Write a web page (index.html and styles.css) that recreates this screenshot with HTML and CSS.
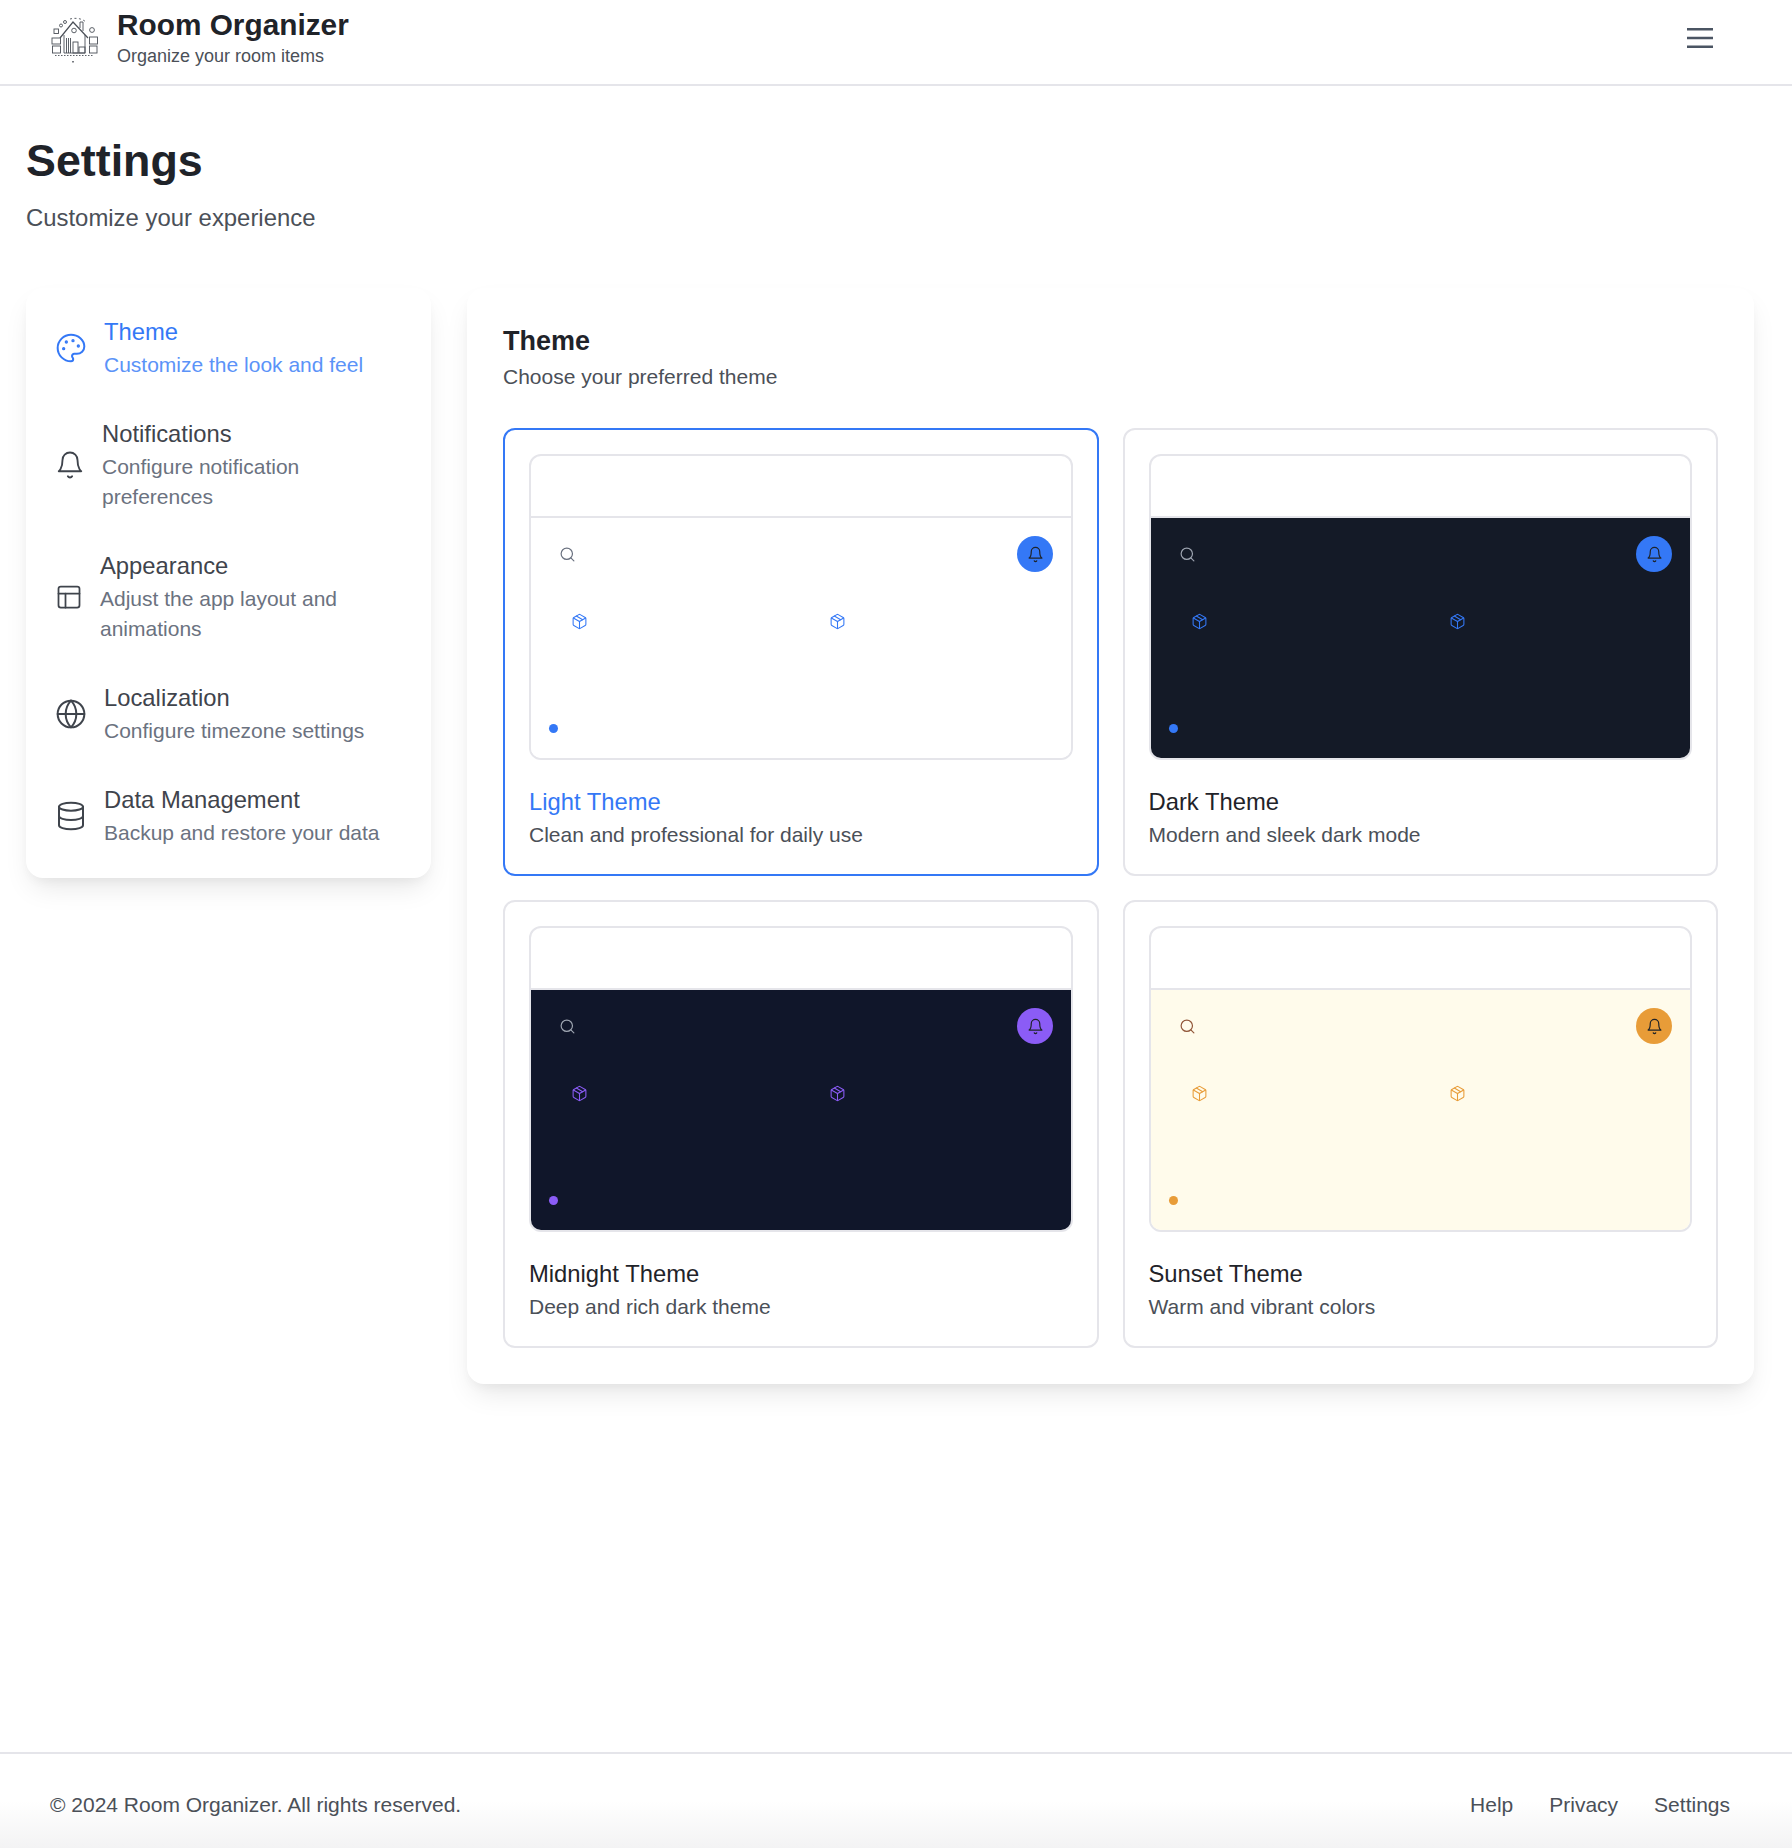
FILE: index.html
```html
<!DOCTYPE html>
<html lang="en">
<head>
    <meta charset="UTF-8">
    <meta name="viewport" content="width=device-width, initial-scale=1.0">
    <title>Settings - Room Organizer</title>
    <link rel="stylesheet" href="styles.css">
</head>
<body>

<svg class="iconDefs" width="0" height="0" aria-hidden="true">
    <defs>
        <symbol id="i-palette" viewBox="0 0 24 24"><circle cx="13.5" cy="6.5" r=".5" fill="currentColor"/><circle cx="17.5" cy="10.5" r=".5" fill="currentColor"/><circle cx="8.5" cy="7.5" r=".5" fill="currentColor"/><circle cx="6.5" cy="12.5" r=".5" fill="currentColor"/><path d="M12 2C6.5 2 2 6.5 2 12s4.5 10 10 10c.926 0 1.648-.746 1.648-1.688 0-.437-.18-.835-.437-1.125-.29-.289-.438-.652-.438-1.125a1.64 1.64 0 0 1 1.668-1.668h1.996c3.051 0 5.555-2.503 5.555-5.554C21.965 6.012 17.461 2 12 2z"/></symbol>
        <symbol id="i-bell" viewBox="0 0 24 24"><path d="M6 8a6 6 0 0 1 12 0c0 7 3 9 3 9H3s3-2 3-9"/><path d="M10.3 21a1.94 1.94 0 0 0 3.4 0"/></symbol>
        <symbol id="i-layout" viewBox="0 0 24 24"><rect x="3" y="3" width="18" height="18" rx="2"/><path d="M3 9h18"/><path d="M9 21V9"/></symbol>
        <symbol id="i-globe" viewBox="0 0 24 24"><circle cx="12" cy="12" r="10"/><path d="M12 2a14.5 14.5 0 0 0 0 20 14.5 14.5 0 0 0 0-20"/><path d="M2 12h20"/></symbol>
        <symbol id="i-database" viewBox="0 0 24 24"><ellipse cx="12" cy="5" rx="9" ry="3"/><path d="M3 5v14a9 3 0 0 0 18 0V5"/><path d="M3 12a9 3 0 0 0 18 0"/></symbol>
        <symbol id="i-search" viewBox="0 0 24 24"><circle cx="11" cy="11" r="8"/><path d="m21 21-4.3-4.3"/></symbol>
        <symbol id="i-package" viewBox="0 0 24 24"><path d="m7.5 4.27 9 5.15"/><path d="M21 8a2 2 0 0 0-1-1.73l-7-4a2 2 0 0 0-2 0l-7 4A2 2 0 0 0 3 8v8a2 2 0 0 0 1 1.73l7 4a2 2 0 0 0 2 0l7-4A2 2 0 0 0 21 16Z"/><path d="m3.3 7 8.7 5 8.7-5"/><path d="M12 22V12"/></symbol>
    </defs>
</svg>

<header class="topBar">
    <div class="brand">
        <svg class="brandLogo" viewBox="0 0 48 46" fill="none" stroke="#4a4f57" stroke-width="0.9">
            <path d="M10 21 23 5l15 16" stroke-width="1.200"/>
            <path d="M14 18v18h21V18"/>
            <path d="M30 11V5h3v9"/>
            <circle cx="24" cy="13.500" r="2.300"/>
            <path d="M16.500 21v15M18.500 21v15M20.500 21v15"/>
            <rect x="23" y="25" width="5" height="11"/>
            <rect x="29" y="30" width="6" height="6"/>
            <rect x="2.500" y="29" width="8" height="7"/>
            <rect x="2" y="21" width="8.500" height="6"/>
            <rect x="4" y="12" width="4.500" height="4.500"/>
            <rect x="39.500" y="20" width="8" height="7"/>
            <rect x="39.500" y="29" width="7.500" height="7"/>
            <circle cx="11" cy="8.500" r="1.500"/>
            <circle cx="15" cy="5" r="1.500"/>
            <circle cx="42" cy="13" r="2.400"/>
            <path d="M20 2c6-1.500 12-.5 16 3" stroke-dasharray="2 2.500"/>
            <path d="M5 38.500h38" stroke-dasharray="1.500 1.500"/>
            <path d="M23 44v1.500" stroke-width="1.500"/>
        </svg>
        <div>
            <div class="brandName">Room Organizer</div>
            <div class="brandTag">Organize your room items</div>
        </div>
    </div>
    <svg class="menuIcon" width="26" height="20" viewBox="0 0 26 20" fill="none" stroke="#4b5563" stroke-width="2.400">
        <path d="M0 1.200h26M0 10h26M0 18.800h26"/>
    </svg>
</header>

<main class="page">
    <h1 class="pageTitle">Settings</h1>
    <p class="pageSub">Customize your experience</p>

    <div class="settingsLayout">
        <nav class="sideNav">
            <a class="navItem active">
                <svg class="navIcon"><use href="#i-palette"/></svg>
                <span class="navText"><span class="navTitle">Theme</span><span class="navDesc">Customize the look and feel</span></span>
            </a>
            <a class="navItem">
                <svg class="navIcon navIconMd"><use href="#i-bell"/></svg>
                <span class="navText"><span class="navTitle">Notifications</span><span class="navDesc">Configure notification preferences</span></span>
            </a>
            <a class="navItem">
                <svg class="navIcon navIconSm"><use href="#i-layout"/></svg>
                <span class="navText"><span class="navTitle">Appearance</span><span class="navDesc">Adjust the app layout and animations</span></span>
            </a>
            <a class="navItem">
                <svg class="navIcon"><use href="#i-globe"/></svg>
                <span class="navText"><span class="navTitle">Localization</span><span class="navDesc">Configure timezone settings</span></span>
            </a>
            <a class="navItem">
                <svg class="navIcon"><use href="#i-database"/></svg>
                <span class="navText"><span class="navTitle">Data Management</span><span class="navDesc">Backup and restore your data</span></span>
            </a>
        </nav>

        <section class="panel">
            <h2 class="panelTitle">Theme</h2>
            <p class="panelSub">Choose your preferred theme</p>

            <div class="themeGrid">
                <div class="themeCard selected light">
                    <div class="preview">
                        <div class="previewTop"></div>
                        <div class="previewBody">
                            <div class="previewRow">
                                <svg class="miniIcon searchIcon"><use href="#i-search"/></svg>
                                <span class="bellBadge"><svg class="miniIcon"><use href="#i-bell"/></svg></span>
                            </div>
                            <div class="previewItems">
                                <svg class="miniIcon boxIcon"><use href="#i-package"/></svg>
                                <svg class="miniIcon boxIcon"><use href="#i-package"/></svg>
                            </div>
                            <span class="previewDot"></span>
                        </div>
                    </div>
                    <div class="themeName">Light Theme</div>
                    <div class="themeDesc">Clean and professional for daily use</div>
                </div>

                <div class="themeCard dark">
                    <div class="preview">
                        <div class="previewTop"></div>
                        <div class="previewBody">
                            <div class="previewRow">
                                <svg class="miniIcon searchIcon"><use href="#i-search"/></svg>
                                <span class="bellBadge"><svg class="miniIcon"><use href="#i-bell"/></svg></span>
                            </div>
                            <div class="previewItems">
                                <svg class="miniIcon boxIcon"><use href="#i-package"/></svg>
                                <svg class="miniIcon boxIcon"><use href="#i-package"/></svg>
                            </div>
                            <span class="previewDot"></span>
                        </div>
                    </div>
                    <div class="themeName">Dark Theme</div>
                    <div class="themeDesc">Modern and sleek dark mode</div>
                </div>

                <div class="themeCard midnight">
                    <div class="preview">
                        <div class="previewTop"></div>
                        <div class="previewBody">
                            <div class="previewRow">
                                <svg class="miniIcon searchIcon"><use href="#i-search"/></svg>
                                <span class="bellBadge"><svg class="miniIcon"><use href="#i-bell"/></svg></span>
                            </div>
                            <div class="previewItems">
                                <svg class="miniIcon boxIcon"><use href="#i-package"/></svg>
                                <svg class="miniIcon boxIcon"><use href="#i-package"/></svg>
                            </div>
                            <span class="previewDot"></span>
                        </div>
                    </div>
                    <div class="themeName">Midnight Theme</div>
                    <div class="themeDesc">Deep and rich dark theme</div>
                </div>

                <div class="themeCard sunset">
                    <div class="preview">
                        <div class="previewTop"></div>
                        <div class="previewBody">
                            <div class="previewRow">
                                <svg class="miniIcon searchIcon"><use href="#i-search"/></svg>
                                <span class="bellBadge"><svg class="miniIcon"><use href="#i-bell"/></svg></span>
                            </div>
                            <div class="previewItems">
                                <svg class="miniIcon boxIcon"><use href="#i-package"/></svg>
                                <svg class="miniIcon boxIcon"><use href="#i-package"/></svg>
                            </div>
                            <span class="previewDot"></span>
                        </div>
                    </div>
                    <div class="themeName">Sunset Theme</div>
                    <div class="themeDesc">Warm and vibrant colors</div>
                </div>
            </div>
        </section>
    </div>
</main>

<footer class="siteFooter">
    <span>© 2024 Room Organizer. All rights reserved.</span>
    <div class="footerLinks">
        <a>Help</a>
        <a>Privacy</a>
        <a>Settings</a>
    </div>
</footer>

</body>
</html>
```

FILE: styles.css
```css
* {
    box-sizing: border-box;
}

body {
    font-family: "Liberation Sans", Arial, sans-serif;
    background-color: #fff;
    color: #1f2329;
    display: flex;
    flex-direction: column;
    min-height: 1848px;
    margin: 0;
}

.iconDefs {
    position: absolute;
}

.topBar {
    display: flex;
    justify-content: space-between;
    align-items: center;
    height: 86px;
    padding: 0 79px 0 50px;
    border-bottom: 2px solid #e5e5ea;
}

.brand {
    display: flex;
    align-items: center;
    gap: 19px;
}

.brandLogo {
    width: 48px;
    height: 46px;
    margin-top: -4px;
}

.brandName {
    font-size: 29.800px;
    font-weight: 700;
    line-height: 36px;
    margin-top: -9px;
}

.brandTag {
    font-size: 18px;
    line-height: 24px;
    margin-top: 1px;
    color: #4b5058;
}

.menuIcon {
    margin-top: -8px;
}

.page {
    padding: 48px 38px 0 26px;
}

.pageTitle {
    font-size: 44.800px;
    font-weight: 700;
    line-height: 52px;
    margin: 0 0 15px;
}

.pageSub {
    font-size: 23.900px;
    line-height: 34px;
    color: #4b5058;
    margin: 0 0 53px;
}

.settingsLayout {
    display: grid;
    grid-template-columns: 405px 1fr;
    gap: 36px;
    align-items: start;
}

.sideNav,
.panel {
    background-color: #fff;
    border-radius: 17px;
    box-shadow: 0 14px 28px -6px rgba(0, 0, 0, 0.1), 0 6px 12px -4px rgba(0, 0, 0, 0.05);
}

.sideNav {
    padding: 9px 8px 11px;
}

.navItem {
    display: flex;
    align-items: center;
    gap: 17px;
    padding: 19px 22px 19px 21px;
    color: #3f444c;
}

.navIcon {
    flex: none;
    width: 32px;
    height: 32px;
    fill: none;
    stroke: currentColor;
    stroke-width: 1.500;
    stroke-linecap: round;
    stroke-linejoin: round;
}

.navIconMd {
    width: 30px;
    height: 30px;
}

.navIconSm {
    width: 28px;
    height: 28px;
}

.navText {
    display: block;
    min-width: 0;
}

.navTitle {
    display: block;
    font-size: 23.800px;
    line-height: 32px;
    margin-bottom: 2px;
}

.navDesc {
    display: block;
    font-size: 21px;
    line-height: 30px;
    color: #6b7280;
}

.navItem.active {
    color: #3478f6;
}

.navItem.active .navDesc {
    color: #5b93f8;
}

.panel {
    padding: 35px 36px 36px;
}

.panelTitle {
    font-size: 27px;
    font-weight: 700;
    line-height: 36px;
    margin: 0 0 2px;
}

.panelSub {
    font-size: 21px;
    line-height: 32px;
    color: #4b5058;
    margin: 0 0 35px;
}

.themeGrid {
    display: grid;
    grid-template-columns: 1fr 1fr;
    gap: 24px;
}

.themeCard {
    --accent: #3478f6;
    --surface: #fff;
    --muted: #6b7280;
    height: 448px;
    padding: 24px;
    border: 2px solid #e5e5ea;
    border-radius: 12px;
}

.themeCard.selected {
    border-color: #3478f6;
}

.themeCard.dark {
    --surface: #141a27;
    --muted: #9ca3af;
}

.themeCard.midnight {
    --accent: #8b5cf6;
    --surface: #10162a;
    --muted: #9ca3af;
}

.themeCard.sunset {
    --accent: #e89c38;
    --surface: #fffbeb;
    --muted: #92573a;
}

.preview {
    display: flex;
    flex-direction: column;
    height: 306px;
    background-color: #fff;
    border: 2px solid #e5e5ea;
    border-radius: 12px;
    overflow: hidden;
}

.previewTop {
    flex: none;
    height: 62px;
    border-bottom: 2px solid #e5e5ea;
}

.previewBody {
    flex: 1;
    display: flex;
    flex-direction: column;
    padding: 18px 18px 25px;
    background-color: var(--surface);
}

.previewRow {
    display: flex;
    justify-content: space-between;
    align-items: center;
    padding-left: 10px;
}

.miniIcon {
    flex: none;
    width: 17px;
    height: 17px;
    fill: none;
    stroke: currentColor;
    stroke-width: 1.700;
    stroke-linecap: round;
    stroke-linejoin: round;
}

.searchIcon {
    color: var(--muted);
}

.bellBadge {
    display: flex;
    align-items: center;
    justify-content: center;
    width: 36px;
    height: 36px;
    padding-left: 1px;
    border-radius: 50%;
    background-color: var(--accent);
    color: #1f2329;
}

.previewItems {
    display: grid;
    grid-template-columns: 258px 1fr;
    padding: 41px 0 0 22px;
    color: var(--accent);
}

.boxIcon {
    stroke-width: 1.500;
}

.previewDot {
    width: 9px;
    height: 9px;
    margin-top: auto;
    border-radius: 50%;
    background-color: var(--accent);
}

.themeName {
    font-size: 23.800px;
    line-height: 32px;
    margin-top: 26px;
    color: #1f2329;
}

.themeCard.selected .themeName {
    color: #3478f6;
}

.themeDesc {
    font-size: 21px;
    line-height: 32px;
    margin-top: 1px;
    color: #4b5058;
}

.siteFooter {
    display: flex;
    justify-content: space-between;
    align-items: center;
    height: 96px;
    margin-top: auto;
    padding: 8px 62px 0 50px;
    font-size: 21px;
    color: #4b5058;
    border-top: 2px solid #e5e5ea;
    background: linear-gradient(to bottom, #fff 50%, #f3f3f4 100%);
}

.footerLinks {
    display: flex;
    gap: 36px;
}
```
